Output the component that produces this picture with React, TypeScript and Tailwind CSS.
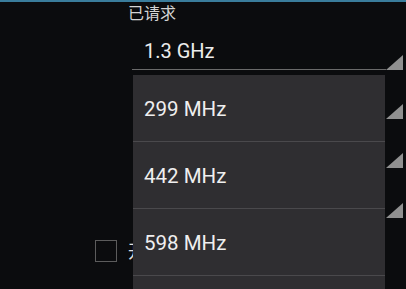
import React from "react";

const font = { fontFamily: 'Roboto, "Noto Sans CJK SC", sans-serif' };

function Corner() {
  return (
    <svg width="17" height="15" viewBox="0 0 17 15" className="shrink-0">
      <polygon points="17,0 17,15 0,15" fill="#909090" />
    </svg>
  );
}

const options = ["299 MHz", "442 MHz", "598 MHz"];

export default function App() {
  return (
    <div
      className="relative w-[406px] h-[289px] overflow-hidden bg-[#0b0c0e] text-[#ececec]"
      style={font}
    >
      <div className="h-[2px] bg-[#3a7d9c]" />

      <div className="flex flex-col">
        <div className="pl-[128px] h-[24px] text-[16px] leading-[24px] text-[#d4d4d4]">
          已请求
        </div>

        {/* current value spinner */}
        <div className="flex items-end h-[44px] pl-[132px] pr-[3px]">
          <div className="flex-1 h-full flex items-end pb-[6px] pl-[12px] border-b border-[#6a6a6a] text-[20px] leading-[24px]">
            1.3 GHz
          </div>
          <Corner />
        </div>

        {/* rows hidden under the popup */}
        <div className="flex items-end justify-end h-[49px] pr-[3px]">
          <Corner />
        </div>
        <div className="flex items-end justify-end h-[49px] pr-[3px]">
          <Corner />
        </div>
        <div className="flex items-end justify-end h-[50px] pr-[3px]">
          <Corner />
        </div>

        <div className="flex items-center h-[66px] pl-[95px] gap-[11px]">
          <div className="w-[22px] h-[22px] border border-[#5c5c5c]" />
          <span className="text-[18px] text-[#e0e0e0]">开机时应用</span>
        </div>
      </div>

      {/* dropdown popup */}
      <div className="absolute left-[133px] top-[75px] w-[252px] bg-[#2f2e31] flex flex-col">
        {options.map((o) => (
          <div
            key={o}
            className="h-[67px] flex items-center pl-[11px] pt-[3px] border-b border-[#4a494c] text-[20.5px] text-[#efefef]"
          >
            {o}
          </div>
        ))}
        <div className="h-[67px]" />
      </div>
    </div>
  );
}
